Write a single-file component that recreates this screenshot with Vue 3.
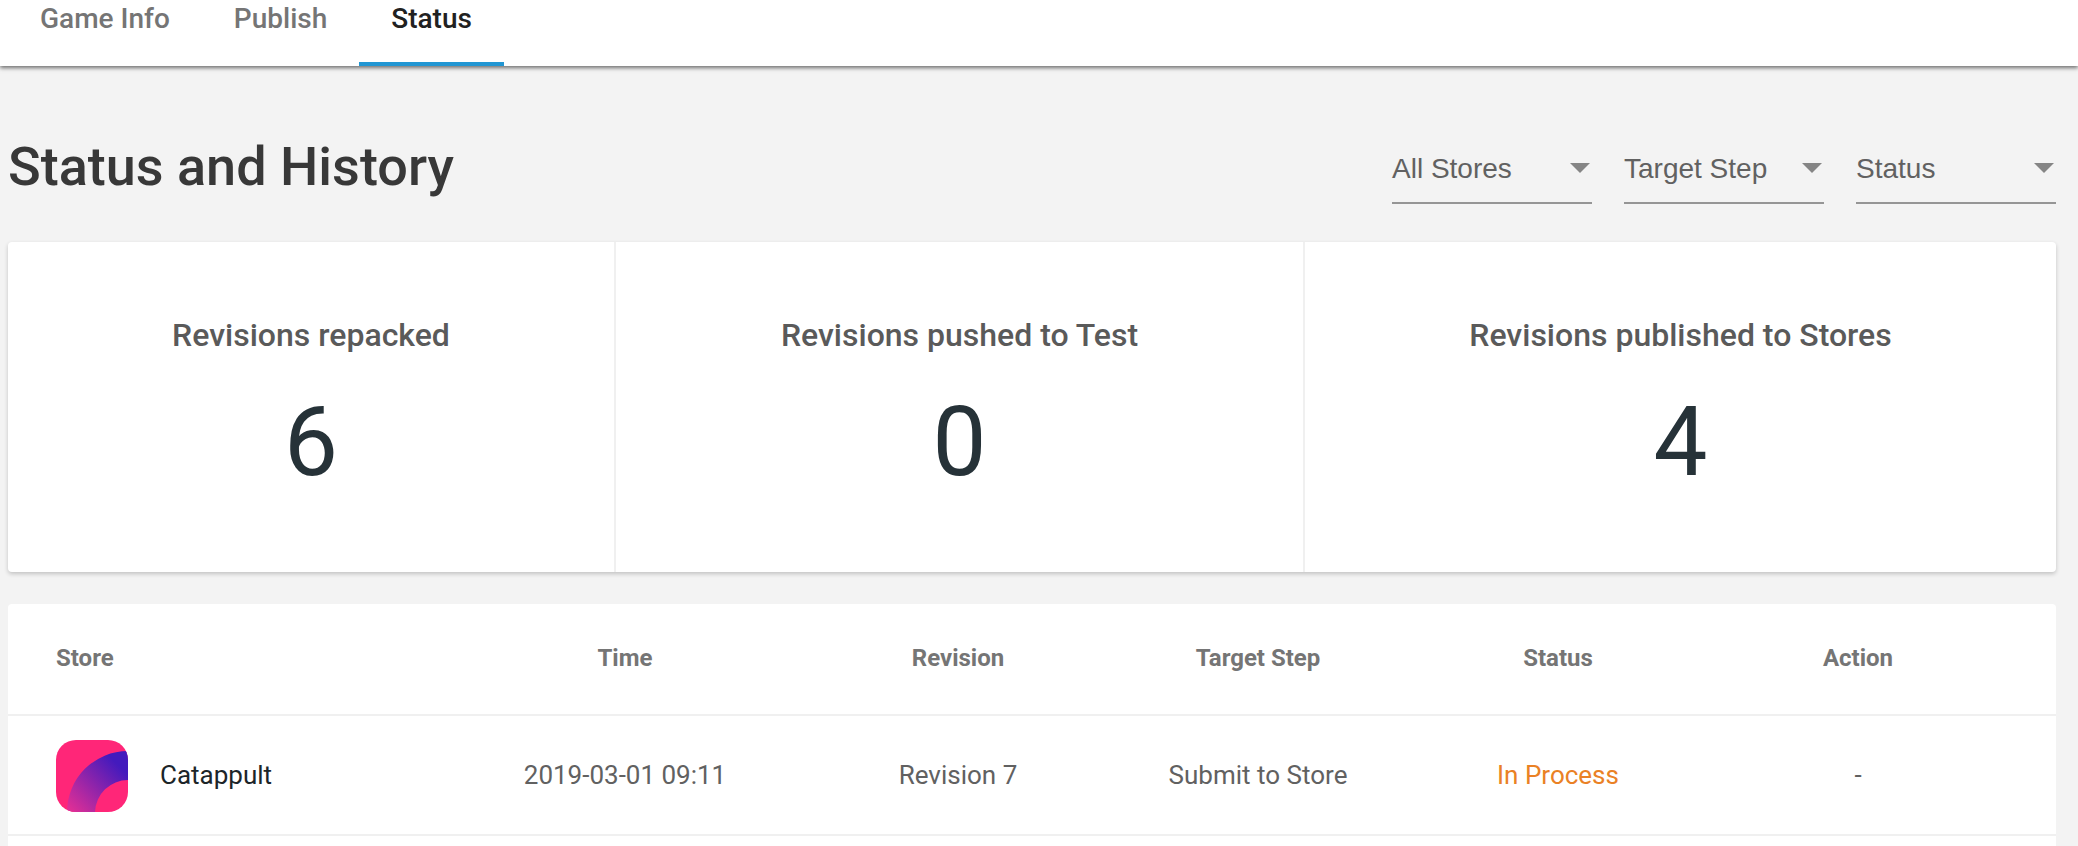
<script setup>
const tabs = [
  { label: 'Game Info', active: false },
  { label: 'Publish', active: false },
  { label: 'Status', active: true },
]
const filters = ['All Stores', 'Target Step', 'Status']
const stats = [
  { label: 'Revisions repacked', value: 6 },
  { label: 'Revisions pushed to Test', value: 0 },
  { label: 'Revisions published to Stores', value: 4 },
]
const heads = ['Time', 'Revision', 'Target Step', 'Status', 'Action']
</script>

<template>
  <div class="page">
    <nav class="tabs">
      <a v-for="t in tabs" :key="t.label" class="tab" :class="{ active: t.active }">{{ t.label }}</a>
    </nav>
    <main class="content">
      <header class="head">
        <h1>Status and History</h1>
        <div class="filters">
          <div v-for="f in filters" :key="f" class="select">
            <span>{{ f }}</span>
            <i class="caret"></i>
          </div>
        </div>
      </header>
      <section class="stats">
        <div v-for="s in stats" :key="s.label" class="stat">
          <div class="stat-label">{{ s.label }}</div>
          <div class="stat-value">{{ s.value }}</div>
        </div>
      </section>
      <section class="table">
        <div class="row header">
          <div class="cell store">Store</div>
          <div v-for="h in heads" :key="h" class="cell">{{ h }}</div>
        </div>
        <div class="row body">
          <div class="cell store">
            <svg class="logo" width="72" height="72" viewBox="0 0 72 72">
              <defs>
                <clipPath id="logo-clip"><rect width="72" height="72" rx="20" /></clipPath>
                <linearGradient id="logo-grad" gradientUnits="userSpaceOnUse" x1="14" y1="72" x2="68" y2="20">
                  <stop offset="0" stop-color="#e32f95" />
                  <stop offset="0.9" stop-color="#431abd" />
                  <stop offset="1" stop-color="#431abd" />
                </linearGradient>
              </defs>
              <g clip-path="url(#logo-clip)">
                <rect width="72" height="72" fill="#ff2678" />
                <path d="M11 72A61 61 0 0 1 72 11V40A33 33 0 0 0 39 72Z" fill="url(#logo-grad)" />
              </g>
            </svg>
            <span class="name">Catappult</span>
          </div>
          <div class="cell">2019-03-01 09:11</div>
          <div class="cell">Revision 7</div>
          <div class="cell">Submit to Store</div>
          <div class="cell process">In Process</div>
          <div class="cell">-</div>
        </div>
      </section>
    </main>
  </div>
</template>

<style>
html, body { margin: 0; background: #f3f3f3; overflow: hidden; }
</style>

<style scoped>
.page {
  height: 846px;
  overflow: hidden;
  background: #f3f3f3;
  font-family: Roboto, sans-serif;
}
.tabs {
  display: flex;
  height: 66px;
  padding-left: 8px;
  background: #fff;
  box-shadow: 0 2px 4px rgba(0, 0, 0, 0.55);
  position: relative;
}
.tab {
  box-sizing: border-box;
  height: 66px;
  padding: 0 32px;
  font-size: 28px;
  font-weight: 500;
  line-height: 38px;
  color: #757575;
}
.tab.active {
  color: #212121;
  border-bottom: 4px solid #2196d3;
}
.content { padding: 0 22px 0 8px; }
.head {
  display: flex;
  justify-content: space-between;
  height: 176px;
}
h1 {
  margin: 0;
  padding-top: 69px;
  font-size: 54px;
  font-weight: 500;
  line-height: 64px;
  color: #383838;
}
.filters { display: flex; gap: 32px; padding-top: 66px; }
.select {
  box-sizing: border-box;
  width: 200px;
  height: 72px;
  display: flex;
  justify-content: space-between;
  align-items: center;
  padding: 3px 2px 0 0;
  border-bottom: 2px solid #959595;
  font-family: "Liberation Sans", Arial, sans-serif;
  font-size: 28px;
  color: #616161;
}
.caret {
  width: 0;
  height: 0;
  margin-top: -2px;
  border-left: 10px solid transparent;
  border-right: 10px solid transparent;
  border-top: 10px solid #858585;
}
.stats {
  display: grid;
  grid-template-columns: 608px 689px 1fr;
  height: 330px;
  background: #fff;
  border-radius: 4px;
  box-shadow: 0 2px 4px rgba(0, 0, 0, 0.2);
}
.stat {
  text-align: center;
  padding-top: 71px;
  border-right: 2px solid #f0f0f0;
}
.stat:last-child { border-right: 0; }
.stat-label {
  font-size: 32px;
  font-weight: 500;
  line-height: 44px;
  color: #5a5a5a;
}
.stat-value {
  margin-top: 29px;
  font-size: 96px;
  font-weight: 400;
  line-height: 112px;
  color: #263238;
}
.table {
  margin-top: 32px;
  height: 400px;
  background: #fff;
  border-radius: 4px 4px 0 0;
}
.row {
  box-sizing: border-box;
  display: grid;
  grid-template-columns: 386px 366px repeat(4, 300px);
  padding: 0 48px;
  align-items: center;
  text-align: center;
  border-bottom: 2px solid #f0f0f0;
}
.header {
  height: 112px;
  padding-bottom: 2px;
  font-size: 24px;
  font-weight: 700;
  color: #757575;
}
.body {
  height: 120px;
  font-size: 26px;
  color: #616161;
}
.store { display: flex; align-items: center; text-align: left; }
.logo { flex: none; margin: 2px 32px 0 0; }
.name { color: #1c2529; }
.process { color: #ea8125; }
</style>
